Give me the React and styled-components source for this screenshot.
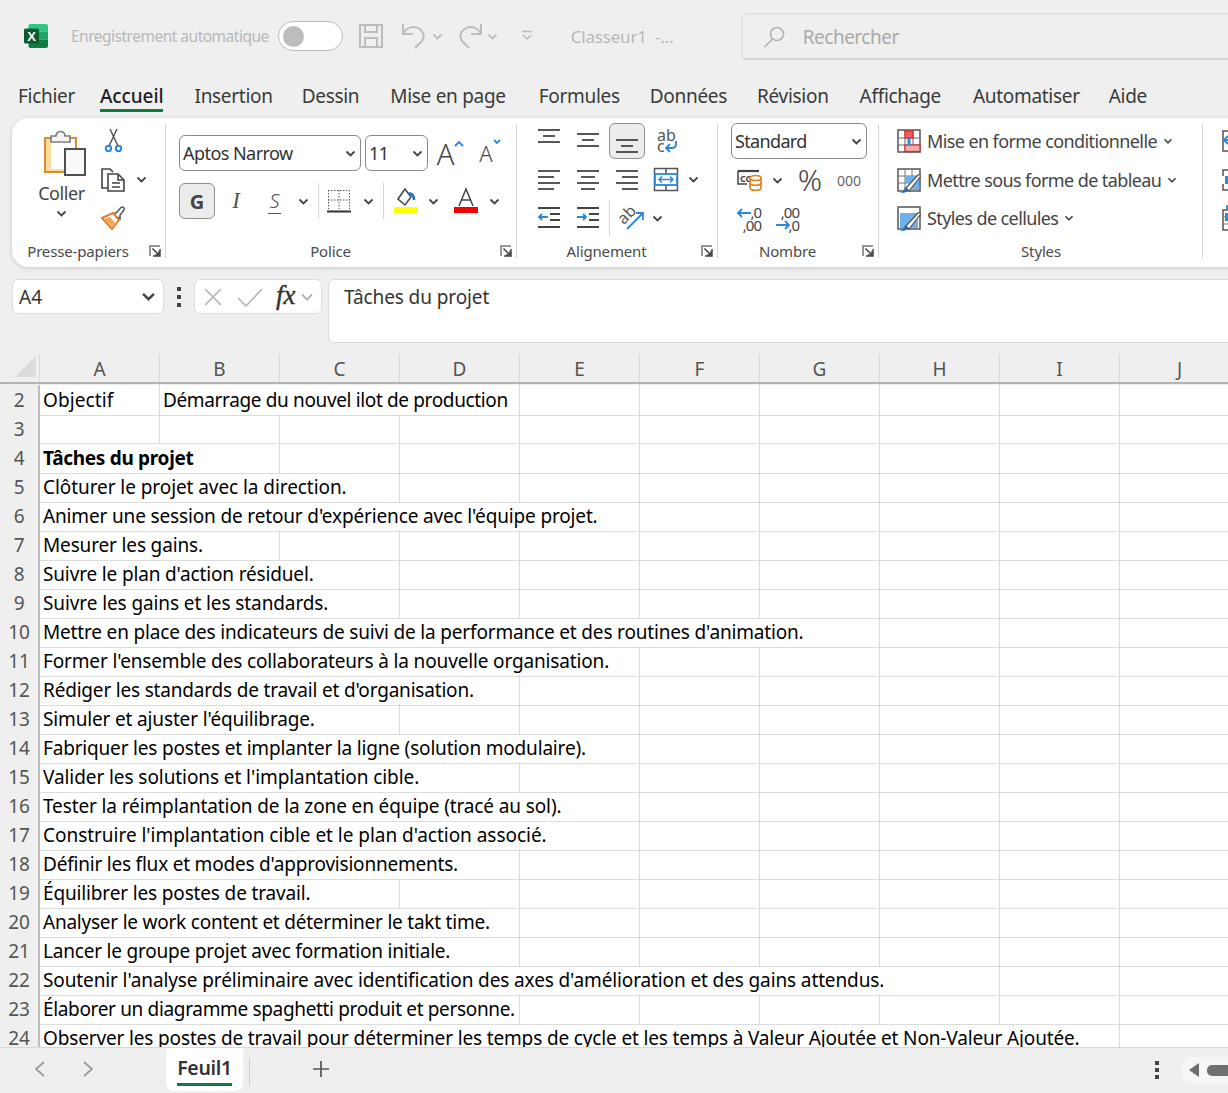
import React from 'react';
import styled, { createGlobalStyle } from 'styled-components';

const UI_FONT = '"Noto Sans", "Liberation Sans", sans-serif';
const CELL_FONT = '"Noto Sans", "Liberation Sans", sans-serif';

const GlobalStyle = createGlobalStyle`
  html, body {
    margin: 0;
    padding: 0;
    background: #efefef;
  }
  * { box-sizing: border-box; }
  svg { overflow: visible; flex: none; }
`;

const Page = styled.div`
  width: 1228px;
  height: 1093px;
  overflow: hidden;
  display: flex;
  flex-direction: column;
  background: #efefef;
  font-family: ${UI_FONT};
  color: #444;
`;

/* title bar */
const TitleBar = styled.div`
  height: 72px;
  flex: none;
  display: flex;
  align-items: center;
  padding-left: 24px;
  color: #b8b8b8;
`;
const TitleText = styled.span`
  flex: none;
  font-size: ${p => p.$size || 15.5}px;
  letter-spacing: ${p => p.$ls || '-0.5px'};
  white-space: nowrap;
  margin-left: ${p => p.$ml || 0}px;
  width: ${p => (p.$w ? `${p.$w}px` : 'auto')};
`;
const Toggle = styled.div`
  width: 65px;
  height: 30px;
  flex: none;
  margin-left: 9px;
  border: 1.5px solid #bdbdbd;
  border-radius: 15px;
  background: #fff;
  display: flex;
  align-items: center;
  padding-left: 4px;
`;
const Knob = styled.div`
  width: 21px;
  height: 21px;
  border-radius: 50%;
  background: #bdbdbd;
`;
const TitleIcon = styled.div`
  display: flex;
  flex: none;
  margin-left: ${p => p.$ml || 0}px;
`;
const SearchBox = styled.div`
  width: 500px;
  height: 47px;
  flex: none;
  margin: 1px 0 0 65px;
  display: flex;
  align-items: center;
  padding-left: 20px;
  gap: 18px;
  border: 2px solid #e2e2e2;
  border-bottom-color: #d4d4d4;
  border-radius: 6px;
  color: #a9a9a9;
  font-size: 19px;
  letter-spacing: -0.5px;
`;

/* menu tabs */
const TabBar = styled.div`
  height: 46px;
  flex: none;
  display: flex;
  gap: 31px;
  padding: 10px 0 0 18px;
  font-size: 19px;
  letter-spacing: -0.3px;
  color: #3a3a3a;
`;
const MenuTab = styled.div`
  height: 30px;
  line-height: 28px;
  white-space: nowrap;
  font-weight: ${p => (p.$active ? 500 : 400)};
  letter-spacing: ${p => (p.$active ? '-0.1px' : 'inherit')};
  color: ${p => (p.$active ? '#222' : '#3a3a3a')};
  border-bottom: 3px solid ${p => (p.$active ? '#107c41' : 'transparent')};
  margin-left: ${p => p.$ml || 0}px;
`;

/* ribbon */
const Ribbon = styled.div`
  height: 149px;
  flex: none;
  margin-left: 12px;
  width: 1240px;
  background: #fff;
  border-radius: 16px 0 0 16px;
  box-shadow: 0 1px 4px rgba(0, 0, 0, 0.16);
  display: flex;
`;
const Group = styled.div`
  width: ${p => p.$w}px;
  flex: none;
  display: flex;
  flex-direction: column;
  position: relative;
  &::after {
    content: '';
    position: absolute;
    right: 0;
    top: 6px;
    bottom: 9px;
    width: 1px;
    background: #d6d6d6;
  }
`;
const GroupBody = styled.div`
  height: 122px;
  flex: none;
  display: flex;
  padding-left: ${p => p.$pl || 0}px;
  padding-top: ${p => p.$pt || 4}px;
`;
const GroupFooter = styled.div`
  flex: 1;
  display: flex;
  align-items: flex-start;
  padding-right: ${p => (p.$launcher ? 5 : 0)}px;
  font-size: 15px;
  letter-spacing: -0.15px;
  color: #4a4a4a;
`;
const GroupLabel = styled.div`
  flex: 1;
  text-align: center;
  line-height: 22px;
`;
const LauncherWrap = styled.div`
  width: 17px;
  padding-top: 5px;
  display: flex;
  justify-content: flex-end;
`;
const PasteCol = styled.div`
  width: 73px;
  display: flex;
  flex-direction: column;
  align-items: center;
  padding-top: 8px;
  font-size: 18px;
  letter-spacing: -0.4px;
  color: #444;
`;
const PasteArt = styled.div`
  display: flex;
  margin-left: 6px;
`;
const PasteText = styled.div`
  line-height: 24px;
  margin-top: 5px;
  margin-bottom: 4px;
`;
const IconGrid = styled.div`
  display: grid;
  grid-template-columns: ${p => p.$cols};
  grid-auto-rows: 38.5px;
  align-items: center;
  justify-items: center;
`;
const IconCell = styled.div`
  display: flex;
  align-items: center;
  justify-content: center;
`;
const OrientCell = styled.div`
  grid-column: span 2;
  justify-self: start;
  width: 62px;
  height: 36px;
  margin-left: 2px;
  border-left: 1px solid #d6d6d6;
  display: flex;
  align-items: center;
  padding-left: 7px;
  gap: 8px;
`;
const PressedBtn = styled.div`
  width: 36px;
  height: 36px;
  background: #ececec;
  border: 1.5px solid #8f8f8f;
  border-radius: 6px;
  display: flex;
  align-items: center;
  justify-content: center;
  font-size: 20px;
  font-weight: 700;
  color: #444;
`;
const SelectBox = styled.div`
  width: ${p => p.$w}px;
  height: 36px;
  flex: none;
  border: 1px solid #8a8a8a;
  border-radius: 6px;
  background: #fff;
  display: flex;
  align-items: center;
  justify-content: space-between;
  padding: 0 4px 0 3px;
  font-size: 18px;
  letter-spacing: ${p => p.$ls || '-0.55px'};
  color: #333;
  margin-right: ${p => p.$mr || 0}px;
`;
const FontColumn = styled.div`
  display: flex;
  flex-direction: column;
  gap: 12px;
`;
const FontRow = styled.div`
  display: flex;
  align-items: center;
  height: 36px;
`;
const FontSlot = styled.div`
  width: ${p => p.$w}px;
  flex: none;
  display: flex;
  justify-content: center;
  align-items: center;
  align-self: stretch;
  margin-left: ${p => p.$ml || 0}px;
  border-left: ${p => (p.$sep ? '1px solid #d6d6d6' : 'none')};
`;
const ItalicMark = styled.span`
  font-family: "Liberation Serif", serif;
  font-style: italic;
  font-size: 23px;
  color: #555;
`;
const UnderlineMark = styled.span`
  font-style: italic;
  font-weight: 300;
  font-size: 20px;
  line-height: 24px;
  border-bottom: 1.5px solid #555;
  color: #555;
  padding: 0 1px;
`;
const SizeMark = styled.div`
  display: flex;
  align-items: flex-start;
  font-weight: 300;
  font-size: ${p => p.$size}px;
  line-height: 1;
  color: #444;
`;
const Caret = styled.svg`
  margin: ${p => p.$top}px 0 0 0;
`;
const NumberColumn = styled.div`
  display: flex;
  flex-direction: column;
`;
const NumberRow = styled.div`
  display: flex;
  align-items: center;
  height: 38.5px;
  margin-top: ${p => p.$mt || 0}px;
`;
const Percent = styled.span`
  font-size: 30px;
  font-weight: 300;
  line-height: 1;
`;
const Thousands = styled.span`
  font-size: 14px;
  color: #666;
  letter-spacing: 0;
`;
const StyleColumn = styled.div`
  display: flex;
  flex-direction: column;
`;
const StyleRow = styled.div`
  height: 38.5px;
  display: flex;
  align-items: center;
  gap: 6px;
  font-size: 18px;
  letter-spacing: -0.6px;
  color: #444;
  white-space: nowrap;
`;

/* formula bar */
const FormulaBar = styled.div`
  height: 64px;
  flex: none;
  margin-top: 12px;
  display: flex;
  align-items: flex-start;
  padding-left: 12px;
`;
const NameBox = styled.div`
  width: 152px;
  height: 35px;
  flex: none;
  background: #fff;
  border: 1px solid #dcdcdc;
  border-radius: 6px;
  display: flex;
  align-items: center;
  justify-content: space-between;
  padding: 0 7px 0 6px;
  font-size: 19px;
  color: #333;
`;
const Dots = styled.div`
  flex: none;
  display: flex;
  flex-direction: column;
  align-items: center;
  justify-content: center;
  gap: ${p => p.$gap || 4}px;
  width: ${p => p.$w || 30}px;
  height: ${p => p.$h || 35}px;
`;
const Dot = styled.div`
  width: 4px;
  height: 4px;
  background: #444;
`;
const FxBox = styled.div`
  width: 128px;
  height: 35px;
  flex: none;
  background: #fff;
  border: 1px solid #dcdcdc;
  border-radius: 6px;
  display: flex;
  align-items: center;
  padding-left: 8px;
  gap: 14px;
`;
const FxLabel = styled.span`
  font-family: "Liberation Serif", serif;
  font-style: italic;
  font-size: 27px;
  line-height: 1;
  color: #333;
  -webkit-text-stroke: 0.4px #333;
  margin: -3px -10px 0 -1px;
`;
const FormulaInput = styled.div`
  width: 920px;
  height: 64px;
  flex: none;
  margin-left: 6px;
  background: #fff;
  border: 1px solid #dcdcdc;
  border-radius: 6px;
  padding: 4px 15px;
  font-family: ${CELL_FONT};
  font-size: 19px;
  letter-spacing: -0.1px;
  line-height: 26px;
  color: #333;
`;

/* sheet */
const HeaderRow = styled.div`
  height: 30px;
  flex: none;
  margin-top: 11px;
  display: flex;
  border-bottom: 2px solid #b4b4b4;
`;
const Corner = styled.div`
  width: 40px;
  flex: none;
  border-right: 1px solid #d8d8d8;
  padding: 2px 0 0 15px;
`;
const ColHead = styled.div`
  width: 120px;
  flex: none;
  text-align: center;
  font-size: 19px;
  line-height: 30px;
  color: #555;
  border-right: 1px solid #d8d8d8;
`;
const Sheet = styled.div`
  height: 662px;
  flex: none;
  margin-top: 1px;
  overflow: hidden;
  background: #fff;
`;
const Row = styled.div`
  height: 29px;
  display: grid;
  grid-template-columns: 40px repeat(10, 120px);
  font-family: ${CELL_FONT};
`;
const RowHead = styled.div`
  background: #efefef;
  border-right: 2px solid #bdbdbd;
  text-align: center;
  font-size: 19px;
  line-height: 30px;
  letter-spacing: -0.2px;
  color: #555;
`;
const Cell = styled.div`
  grid-column: span ${p => p.$span || 1};
  border-right: 1px solid #dcdcdc;
  border-bottom: 1px solid #dcdcdc;
  padding-left: 3px;
  font-size: 19px;
  line-height: 30px;
  letter-spacing: ${p => p.$ls ?? -0.15}px;
  font-weight: ${p => (p.$bold ? 700 : 400)};
  color: #000;
  white-space: nowrap;
  overflow: visible;
`;

/* bottom bar */
const SheetBar = styled.div`
  flex: 1;
  display: flex;
  align-items: flex-start;
  border-top: 1px solid #d8d8d8;
`;
const NavArrows = styled.div`
  width: 166px;
  flex: none;
  display: flex;
  gap: 36px;
  padding: 12px 0 0 34px;
`;
const SheetTab = styled.div`
  width: 77px;
  height: 43px;
  flex: none;
  background: #fff;
  border-radius: 0 0 8px 8px;
  font-size: 19.5px;
  font-weight: 600;
  color: #333;
  line-height: 26px;
  padding-top: 7px;
  letter-spacing: -0.3px;
  display: flex;
  justify-content: center;
`;
const TabLabel = styled.div`
  height: 31px;
  border-bottom: 3px solid #107c41;
`;
const TabSep = styled.div`
  width: 1px;
  height: 28px;
  flex: none;
  margin: 10px 0 0 6px;
  background: #cfcfcf;
`;
const AddSheet = styled.div`
  flex: none;
  margin: 12px 0 0 62px;
  display: flex;
`;
const BarDots = styled.div`
  flex: none;
  margin: 13px 0 0 824px;
`;
const ScrollPill = styled.div`
  flex: none;
  width: 60px;
  height: 26px;
  margin: 9px 0 0 21px;
  background: #f6f6f6;
  border-radius: 13px 0 0 13px;
  display: flex;
  align-items: center;
  padding-left: 8px;
  gap: 8px;
`;
const ScrollThumb = styled.div`
  width: 40px;
  height: 11px;
  flex: none;
  border-radius: 5px 0 0 5px;
  background: #707070;
`;

/* icons */
const Chevron = ({ size = 9, color = '#444', weight = 1.8 }) => (
  <svg width={size + 2} height={size} viewBox="0 0 11 9">
    <path d="M1.5 2.5 5.5 6.5 9.5 2.5" fill="none" stroke={color} strokeWidth={weight} />
  </svg>
);
const ExcelLogo = () => (
  <svg width="24" height="24" viewBox="0 0 24 24">
    <path d="M6.500 0H22a2 2 0 0 1 2 2v5.500H4.500V2a2 2 0 0 1 2-2z" fill="#33c481" />
    <rect x="14" y="7.500" width="10" height="8" fill="#21a366" />
    <rect x="4.500" y="7.500" width="9.500" height="8" fill="#18864e" />
    <path d="M4.500 15.500H24V22a2 2 0 0 1-2 2H6.500a2 2 0 0 1-2-2z" fill="#107c41" />
    <rect x="0" y="4.500" width="15" height="15" rx="1.500" fill="#0b5a30" />
    <text x="7.500" y="16.800" textAnchor="middle" fontFamily="Liberation Sans" fontWeight="700" fontSize="13" fill="#fff">X</text>
  </svg>
);
const SaveIcon = () => (
  <svg width="24" height="26" viewBox="0 0 24 26" fill="none" stroke="#bdbdbd" strokeWidth="2">
    <path d="M1 2h22v22H1z" />
    <path d="M6 2v7h12V2M6 24v-9h12v9" />
  </svg>
);
const UndoIcon = () => (
  <svg width="23" height="26" viewBox="0 0 23 26" fill="none" stroke="#bdbdbd" strokeWidth="2">
    <path d="M1 1v10h10" />
    <path d="M1.500 10C5 4 12 2.500 17 5.500c5 3.500 6 9 2.500 13L13 25" />
  </svg>
);
const RedoIcon = () => (
  <svg width="23" height="26" viewBox="0 0 23 26" fill="none" stroke="#bdbdbd" strokeWidth="2">
    <path d="M22 1v10H12" />
    <path d="M21.500 10C18 4 11 2.500 6 5.500c-5 3.500-6 9-2.500 13L10 25" />
  </svg>
);
const QatMore = () => (
  <svg width="12" height="12" viewBox="0 0 12 12" fill="none" stroke="#bdbdbd" strokeWidth="1.500">
    <path d="M1 1.500h10M2 5l4 4 4-4" />
  </svg>
);
const SearchIcon = () => (
  <svg width="22" height="22" viewBox="0 0 22 22" fill="none" stroke="#b5b5b5" strokeWidth="1.700">
    <circle cx="14" cy="8" r="6.500" />
    <path d="M9.500 13 1.500 21" />
  </svg>
);
const PasteIcon = () => (
  <svg width="42" height="46" viewBox="0 0 42 46">
    <path d="M1 8h31v34H1z" fill="#fff" stroke="#e08a2e" strokeWidth="2" />
    <path d="M2 9h5v30h18v2H2z" fill="#fbdc9c" />
    <path d="M7 12V6h5c0-6 9-6 9 0h5v6z" fill="#f4f4f4" stroke="#7d7d7d" strokeWidth="1.700" />
    <rect x="21" y="19" width="20" height="26" fill="#fafafa" stroke="#505050" strokeWidth="2" />
  </svg>
);
const CutIcon = () => (
  <svg width="17" height="24" viewBox="0 0 17 24" fill="none">
    <path d="M5 0 12.500 16M12 0 4.500 16" stroke="#555" strokeWidth="1.500" />
    <circle cx="3.500" cy="19.500" r="2.700" stroke="#2b88d8" strokeWidth="2" />
    <circle cx="13.500" cy="19.500" r="2.700" stroke="#2b88d8" strokeWidth="2" />
  </svg>
);
const CopyIcon = () => (
  <svg width="24" height="24" viewBox="0 0 24 24" fill="none" stroke="#444" strokeWidth="1.600">
    <path d="M6 20H1V1h8l3 3" />
    <path d="M7 6h10l6 6v11H7z" fill="#fff" />
    <path d="M17 6v6h6M11 15h8M11 19h8" />
  </svg>
);
const BrushIcon = () => (
  <svg width="24" height="24" viewBox="0 0 24 24">
    <path d="M11 8 15 7 20 1.500c1.500-1.500 4 .5 3 2.500l-4 5 0 4z" fill="#fff" stroke="#555" strokeWidth="1.500" />
    <path d="M1 12 12 7l6 7-7 9z" fill="#fff" stroke="#e0812b" strokeWidth="2" />
    <path d="M3 13l8 8 3-4-5-6z" fill="#f2a65a" />
  </svg>
);
const Launcher = () => (
  <svg width="12" height="12" viewBox="0 0 12 12" fill="none">
    <path d="M1 11V1h10" stroke="#777" strokeWidth="1.500" />
    <path d="M11 4v7H4" stroke="#444" strokeWidth="1.500" />
    <path d="M3.500 3.500 10 10M10 6v4H6" stroke="#444" strokeWidth="1.500" />
  </svg>
);
const BorderIcon = () => (
  <svg width="24" height="24" viewBox="0 0 24 24" fill="none">
    <path d="M1 1.500h22M1.500 1v19M22.500 1v19M1 11h22M12 1v19" stroke="#555" strokeWidth="1" strokeDasharray="1.500 1.500" />
    <path d="M0 22.500h24" stroke="#333" strokeWidth="2" />
  </svg>
);
const FillIcon = () => (
  <svg width="24" height="26" viewBox="0 0 24 26">
    <path d="M4 11 11 1l6 8-6 8z" fill="#fff" stroke="#444" strokeWidth="1.500" />
    <path d="M14 6c4-2 6 2 6 6" fill="none" stroke="#1f6fc0" strokeWidth="2.500" />
    <rect y="19" width="24" height="6" fill="#ffff00" />
  </svg>
);
const ColorA = () => (
  <svg width="24" height="26" viewBox="0 0 24 26">
    <path d="M5 18 12 1l7 17M7.500 12h9" fill="none" stroke="#444" strokeWidth="1.500" />
    <rect y="19" width="24" height="6" fill="#f40000" />
  </svg>
);
const Lines = ({ rows }) => (
  <svg width="24" height="24" viewBox="0 0 24 24" fill="none" stroke="#444" strokeWidth="1.800">
    {rows.map(([x1, x2, y]) => (
      <path key={y} d={`M${x1} ${y}H${x2}`} />
    ))}
  </svg>
);
const WrapIcon = () => (
  <svg width="24" height="28" viewBox="0 0 24 28" fill="none">
    <text x="3" y="13.500" fontFamily="Noto Sans" fontSize="16" fill="#555">ab</text>
    <text x="3" y="24.500" fontFamily="Noto Sans" fontSize="16" fill="#555">c</text>
    <path d="M22 14v3c0 3-2 4-4 4h-6M16 17l-4 4 4 4" stroke="#2b88d8" strokeWidth="1.900" />
  </svg>
);
const MergeIcon = () => (
  <svg width="24" height="23" viewBox="0 0 24 23">
    <rect x="0.500" y="0.500" width="23" height="22" fill="#fff" stroke="#555" strokeWidth="1.500" />
    <path d="M12 1v5M12 17v5" stroke="#555" strokeWidth="1.500" />
    <rect x="1" y="6" width="22" height="11" fill="#fff" stroke="#2b88d8" strokeWidth="1.800" />
    <path d="M5 11.500h14M8 8.500l-3 3 3 3M16 8.500l3 3-3 3" fill="none" stroke="#2b88d8" strokeWidth="1.500" />
  </svg>
);
const IndentIcon = ({ right }) => (
  <svg width="22" height="24" viewBox="0 0 22 24" fill="none">
    <path d="M0 2h22M0 21h22M12 8h10M12 14h10" stroke="#444" strokeWidth="1.800" />
    <path d={right ? 'M0 11h9M6 8l3 3-3 3' : 'M1 11h9M4 8l-3 3 3 3'} stroke="#2b88d8" strokeWidth="1.800" />
  </svg>
);
const OrientIcon = () => (
  <svg width="27" height="24" viewBox="0 0 27 24" fill="none">
    <text x="10" y="14" textAnchor="middle" transform="rotate(-45 10 9)" fontFamily="Noto Sans" fontSize="16" fill="#555">ab</text>
    <path d="M10 23 26 7M19 7h7v7" stroke="#2b88d8" strokeWidth="1.800" />
  </svg>
);
const AccountingIcon = () => (
  <svg width="26" height="24" viewBox="0 0 26 24" fill="none">
    <path d="M1 3h21" stroke="#444" strokeWidth="2.200" />
    <path d="M1 3v13h9" stroke="#444" strokeWidth="1.500" />
    <text x="3" y="13.500" fontFamily="Noto Sans" fontSize="9" fontWeight="700" fill="#444">CC</text>
    <path d="M13 10v10c0 3 11 3 11 0V10z" fill="#fff" stroke="#e8811a" strokeWidth="1.700" />
    <ellipse cx="18.500" cy="10" rx="5.500" ry="2.500" fill="#fff" stroke="#e8811a" strokeWidth="1.700" />
    <path d="M13 15c0 3 11 3 11 0" stroke="#e8811a" strokeWidth="1.700" />
  </svg>
);
const DecimalIcon = ({ more }) => (
  <svg width="26" height="26" viewBox="0 0 26 26" fill="none">
    {more ? (
      <>
        <text x="24" y="11.500" textAnchor="end" fontFamily="Noto Sans" fontSize="15" letterSpacing="-1" fill="#444">,00</text>
        <text x="24" y="25" textAnchor="end" fontFamily="Noto Sans" fontSize="15" letterSpacing="-1" fill="#444">,0</text>
        <path d="M1 19h13M10 15l4 4-4 4" stroke="#2b88d8" strokeWidth="1.800" />
      </>
    ) : (
      <>
        <text x="25" y="11.500" textAnchor="end" fontFamily="Noto Sans" fontSize="15" letterSpacing="-1" fill="#444">,0</text>
        <text x="25" y="25" textAnchor="end" fontFamily="Noto Sans" fontSize="15" letterSpacing="-1" fill="#444">,00</text>
        <path d="M2 7h13M6 3 2 7l4 4" stroke="#2b88d8" strokeWidth="1.800" />
      </>
    )}
  </svg>
);
const CondFormatIcon = () => (
  <svg width="24" height="24" viewBox="0 0 24 24">
    <rect x="1" y="1" width="22" height="22" fill="#fff" stroke="#555" strokeWidth="1.500" />
    <path d="M8 1v22M16 1v22M1 9h22M1 16h22" stroke="#666" strokeWidth="1" fill="none" />
    <rect x="8" y="2" width="8" height="7" fill="#f25c5c" stroke="#d92b2b" strokeWidth="1.200" />
    <rect x="8" y="16" width="15" height="6.500" fill="#f7a8a8" stroke="#d92b2b" strokeWidth="1.200" />
    <path d="M12 9v7" stroke="#2b88d8" strokeWidth="3" />
  </svg>
);
const TableIcon = ({ plain }) => (
  <svg width="24" height="24" viewBox="0 0 24 24">
    <rect x="1" y="1" width="22" height="22" fill="#fff" stroke="#555" strokeWidth="1.500" />
    {plain ? (
      <path d="M3 7h18v15H3z" fill="#6eb0ea" />
    ) : (
      <>
        <path d="M1 8h22M1 15h22M8 1v22M15 1v22" stroke="#777" strokeWidth="1" fill="none" />
        <path d="M15 8h7v7h-7zM8 8h7v7H8zM15 15h7v7h-7z" fill="#6eb0ea" />
      </>
    )}
    <path d="M9 20 21 7c1-1 3 0 2 2L12 23z" fill="#fff" stroke="#555" strokeWidth="1.200" />
    <path d="M1 25c4 0 6-2 7-6l3 3c-2 3-5 3-10 3z" fill="#1f6fc0" />
  </svg>
);
const InsertCellsIcon = () => (
  <svg width="24" height="24" viewBox="0 0 24 24" fill="none">
    <rect x="1" y="2" width="22" height="20" stroke="#555" strokeWidth="1.500" />
    <path d="M14 11H2M6 7l-4 4 4 4" stroke="#2b88d8" strokeWidth="1.800" />
  </svg>
);
const DeleteCellsIcon = () => (
  <svg width="24" height="24" viewBox="0 0 24 24" fill="none">
    <path d="M1 8V2h22v6M1 16v6h22v-6" stroke="#555" strokeWidth="1.500" />
    <rect x="3" y="8" width="4" height="8" fill="#2b88d8" />
  </svg>
);
const FormatCellsIcon = () => (
  <svg width="24" height="26" viewBox="0 0 24 26" fill="none">
    <rect x="1" y="5" width="22" height="20" stroke="#555" strokeWidth="1.500" />
    <path d="M1 12h22M1 19h22" stroke="#777" strokeWidth="1" />
    <path d="M5 0v5" stroke="#2b88d8" strokeWidth="1.800" />
    <rect x="3" y="8" width="4" height="8" fill="#2b88d8" />
  </svg>
);
const FormulaCross = () => (
  <svg width="20" height="20" viewBox="0 0 20 20" fill="none" stroke="#b5b5b5" strokeWidth="1.700">
    <path d="M2 2 18 18M18 2 2 18" />
  </svg>
);
const FormulaCheck = () => (
  <svg width="26" height="20" viewBox="0 0 26 20" fill="none" stroke="#b5b5b5" strokeWidth="1.700">
    <path d="M1 11 9 19 25 2" />
  </svg>
);
const NavArrow = ({ right }) => (
  <svg width="12" height="18" viewBox="0 0 12 18" fill="none" stroke="#9a9a9a" strokeWidth="1.800">
    <path d={right ? 'M2 2l8 7-8 7' : 'M10 2 2 9l8 7'} />
  </svg>
);
const PlusIcon = () => (
  <svg width="18" height="18" viewBox="0 0 18 18" fill="none" stroke="#555" strokeWidth="1.700">
    <path d="M9 1v16M1 9h16" />
  </svg>
);
const ScrollLeft = () => (
  <svg width="10" height="14" viewBox="0 0 10 14">
    <path d="M10 0v14L0 7z" fill="#6e6e6e" />
  </svg>
);

const tabs = [
  { name: 'Fichier' },
  { name: 'Accueil', ml: -6, active: true },
  { name: 'Insertion' },
  { name: 'Dessin', ml: -2 },
  { name: 'Mise en page' },
  { name: 'Formules', ml: 2 },
  { name: 'Données', ml: -1 },
  { name: 'Révision', ml: -1 },
  { name: 'Affichage' },
  { name: 'Automatiser', ml: 1 },
  { name: 'Aide', ml: -2 },
];
const columns = ['A', 'B', 'C', 'D', 'E', 'F', 'G', 'H', 'I', 'J'];

// span = number of columns the text runs over, ls = letter spacing where the width differs
const rows = [
  { n: 2, cells: [{ text: 'Objectif', span: 1, ls: 0.1 }, { text: 'Démarrage du nouvel ilot de production', span: 3, ls: -0.36 }] },
  { n: 3, cells: [] },
  { n: 4, cells: [{ text: 'Tâches du projet', span: 2, bold: true, ls: -0.3 }] },
  { n: 5, cells: [{ text: 'Clôturer le projet avec la direction.', span: 3, ls: -0.07 }] },
  { n: 6, cells: [{ text: "Animer une session de retour d'expérience avec l'équipe projet.", span: 5 }] },
  { n: 7, cells: [{ text: 'Mesurer les gains.', span: 2 }] },
  { n: 8, cells: [{ text: "Suivre le plan d'action résiduel.", span: 3 }] },
  { n: 9, cells: [{ text: 'Suivre les gains et les standards.', span: 3, ls: -0.1 }] },
  { n: 10, cells: [{ text: "Mettre en place des indicateurs de suivi de la performance et des routines d'animation.", span: 7, ls: -0.17 }] },
  { n: 11, cells: [{ text: "Former l'ensemble des collaborateurs à la nouvelle organisation.", span: 5 }] },
  { n: 12, cells: [{ text: "Rédiger les standards de travail et d'organisation.", span: 4, ls: -0.19 }] },
  { n: 13, cells: [{ text: "Simuler et ajuster l'équilibrage.", span: 3 }] },
  { n: 14, cells: [{ text: 'Fabriquer les postes et implanter la ligne (solution modulaire).', span: 5, ls: -0.18 }] },
  { n: 15, cells: [{ text: "Valider les solutions et l'implantation cible.", span: 4, ls: -0.08 }] },
  { n: 16, cells: [{ text: 'Tester la réimplantation de la zone en équipe (tracé au sol).', span: 5, ls: -0.12 }] },
  { n: 17, cells: [{ text: "Construire l'implantation cible et le plan d'action associé.", span: 5, ls: -0.03 }] },
  { n: 18, cells: [{ text: "Définir les flux et modes d'approvisionnements.", span: 4, ls: -0.21 }] },
  { n: 19, cells: [{ text: 'Équilibrer les postes de travail.', span: 3 }] },
  { n: 20, cells: [{ text: 'Analyser le work content et déterminer le takt time.', span: 4, ls: -0.23 }] },
  { n: 21, cells: [{ text: 'Lancer le groupe projet avec formation initiale.', span: 4, ls: -0.21 }] },
  { n: 22, cells: [{ text: "Soutenir l'analyse préliminaire avec identification des axes d'amélioration et des gains attendus.", span: 8, ls: -0.12 }] },
  { n: 23, cells: [{ text: 'Élaborer un diagramme spaghetti produit et personne.', span: 4, ls: -0.34 }] },
  { n: 24, cells: [{ text: 'Observer les postes de travail pour déterminer les temps de cycle et les temps à Valeur Ajoutée et Non-Valeur Ajoutée.', span: 9 }] },
];

const SheetRow = ({ row }) => {
  const used = row.cells.reduce((sum, c) => sum + c.span, 0);
  const blanks = Array.from({ length: 10 - used });
  return (
    <Row>
      <RowHead>{row.n}</RowHead>
      {row.cells.map((c, i) => (
        <Cell key={i} $span={c.span} $bold={c.bold} $ls={c.ls}>{c.text}</Cell>
      ))}
      {blanks.map((_, i) => (
        <Cell key={`b${i}`} />
      ))}
    </Row>
  );
};

const App = () => (
  <Page>
    <GlobalStyle />
    <TitleBar>
      <TitleIcon><ExcelLogo /></TitleIcon>
      <TitleText $ml={23}>Enregistrement automatique</TitleText>
      <Toggle><Knob /></Toggle>
      <TitleIcon $ml={16}><SaveIcon /></TitleIcon>
      <TitleIcon $ml={19}><UndoIcon /></TitleIcon>
      <TitleIcon $ml={7}><Chevron color="#bdbdbd" /></TitleIcon>
      <TitleIcon $ml={16}><RedoIcon /></TitleIcon>
      <TitleIcon $ml={5}><Chevron color="#bdbdbd" /></TitleIcon>
      <TitleIcon $ml={23}><QatMore /></TitleIcon>
      <TitleText $ml={38} $w={105} $size={17} $ls="-0.2px">Classeur1&nbsp;&nbsp;-...</TitleText>
      <SearchBox>
        <SearchIcon />
        <span>Rechercher</span>
      </SearchBox>
    </TitleBar>

    <TabBar>
      {tabs.map(t => (
        <MenuTab key={t.name} $active={t.active} $ml={t.ml}>{t.name}</MenuTab>
      ))}
    </TabBar>

    <Ribbon>
      <Group $w={154}>
        <GroupBody $pl={13}>
          <PasteCol>
            <PasteArt><PasteIcon /></PasteArt>
            <PasteText>Coller</PasteText>
            <Chevron />
          </PasteCol>
          <IconGrid $cols="30px 26px">
            <IconCell><CutIcon /></IconCell>
            <span />
            <IconCell><CopyIcon /></IconCell>
            <IconCell><Chevron /></IconCell>
            <IconCell><BrushIcon /></IconCell>
          </IconGrid>
        </GroupBody>
        <GroupFooter $launcher>
          <GroupLabel>Presse-papiers</GroupLabel>
          <LauncherWrap><Launcher /></LauncherWrap>
        </GroupFooter>
      </Group>

      <Group $w={351}>
        <GroupBody $pl={13} $pt={17}>
          <FontColumn>
            <FontRow>
              <SelectBox $w={182} $mr={4}>Aptos Narrow<Chevron /></SelectBox>
              <SelectBox $w={63}>11<Chevron /></SelectBox>
              <FontSlot $w={25} $ml={10}>
                <SizeMark $size={29}>
                  A
                  <Caret $top={2} width="10" height="6" viewBox="0 0 10 6" fill="none"><path d="M1 5l4-4 4 4" stroke="#2b88d8" strokeWidth="1.800" /></Caret>
                </SizeMark>
              </FontSlot>
              <FontSlot $w={22} $ml={16}>
                <SizeMark $size={22}>
                  A
                  <Caret $top={-3} width="8" height="6" viewBox="0 0 8 6" fill="none"><path d="M1 1l3 3 3-3" stroke="#2b88d8" strokeWidth="1.800" /></Caret>
                </SizeMark>
              </FontSlot>
            </FontRow>
            <FontRow>
              <PressedBtn>G</PressedBtn>
              <FontSlot $w={42}><ItalicMark>I</ItalicMark></FontSlot>
              <FontSlot $w={35}><UnderlineMark>S</UnderlineMark></FontSlot>
              <FontSlot $w={22}><Chevron /></FontSlot>
              <FontSlot $w={40} $ml={4} $sep><BorderIcon /></FontSlot>
              <FontSlot $w={20}><Chevron /></FontSlot>
              <FontSlot $w={44} $ml={5} $sep><FillIcon /></FontSlot>
              <FontSlot $w={12}><Chevron /></FontSlot>
              <FontSlot $w={24} $ml={15}><ColorA /></FontSlot>
              <FontSlot $w={12} $ml={10}><Chevron /></FontSlot>
            </FontRow>
          </FontColumn>
        </GroupBody>
        <GroupFooter $launcher>
          <GroupLabel>Police</GroupLabel>
          <LauncherWrap><Launcher /></LauncherWrap>
        </GroupFooter>
      </Group>

      <Group $w={201}>
        <GroupBody $pl={12}>
          <IconGrid $cols="39px 39px 39px 39px 16px">
            <IconCell><Lines rows={[[1, 23, 1], [6, 18, 7], [1, 23, 13]]} /></IconCell>
            <IconCell><Lines rows={[[1, 23, 5], [6, 18, 11], [1, 23, 17]]} /></IconCell>
            <IconCell><PressedBtn><Lines rows={[[1, 23, 11], [6, 18, 17], [1, 23, 23]]} /></PressedBtn></IconCell>
            <IconCell><WrapIcon /></IconCell>
            <span />
            <IconCell><Lines rows={[[1, 23, 3], [1, 17, 9], [1, 23, 15], [1, 17, 21]]} /></IconCell>
            <IconCell><Lines rows={[[1, 23, 3], [5, 19, 9], [1, 23, 15], [5, 19, 21]]} /></IconCell>
            <IconCell><Lines rows={[[1, 23, 3], [7, 23, 9], [1, 23, 15], [7, 23, 21]]} /></IconCell>
            <IconCell><MergeIcon /></IconCell>
            <IconCell><Chevron /></IconCell>
            <IconCell><IndentIcon /></IconCell>
            <IconCell><IndentIcon right /></IconCell>
            <OrientCell>
              <OrientIcon />
              <Chevron />
            </OrientCell>
          </IconGrid>
        </GroupBody>
        <GroupFooter $launcher>
          <GroupLabel>Alignement</GroupLabel>
          <LauncherWrap><Launcher /></LauncherWrap>
        </GroupFooter>
      </Group>

      <Group $w={161}>
        <GroupBody $pl={13} $pt={5}>
          <NumberColumn>
            <SelectBox $w={136} $ls="-0.65px">Standard<Chevron /></SelectBox>
            <NumberRow $mt={2}>
              <FontSlot $w={38}><AccountingIcon /></FontSlot>
              <FontSlot $w={16}><Chevron /></FontSlot>
              <FontSlot $w={50}><Percent>%</Percent></FontSlot>
              <FontSlot $w={28}><Thousands>000</Thousands></FontSlot>
            </NumberRow>
            <NumberRow>
              <FontSlot $w={36}><DecimalIcon /></FontSlot>
              <FontSlot $w={42}><DecimalIcon more /></FontSlot>
            </NumberRow>
          </NumberColumn>
        </GroupBody>
        <GroupFooter $launcher>
          <GroupLabel>Nombre</GroupLabel>
          <LauncherWrap><Launcher /></LauncherWrap>
        </GroupFooter>
      </Group>

      <Group $w={324}>
        <GroupBody $pl={18}>
          <StyleColumn>
            <StyleRow><CondFormatIcon />Mise en forme conditionnelle <Chevron size={8} /></StyleRow>
            <StyleRow><TableIcon />Mettre sous forme de tableau <Chevron size={8} /></StyleRow>
            <StyleRow><TableIcon plain />Styles de cellules <Chevron size={8} /></StyleRow>
          </StyleColumn>
        </GroupBody>
        <GroupFooter>
          <GroupLabel>Styles</GroupLabel>
        </GroupFooter>
      </Group>

      <Group $w={60}>
        <GroupBody $pl={19}>
          <StyleColumn>
            <StyleRow><InsertCellsIcon /></StyleRow>
            <StyleRow><DeleteCellsIcon /></StyleRow>
            <StyleRow><FormatCellsIcon /></StyleRow>
          </StyleColumn>
        </GroupBody>
      </Group>
    </Ribbon>

    <FormulaBar>
      <NameBox>A4<Chevron size={13} /></NameBox>
      <Dots><Dot /><Dot /><Dot /></Dots>
      <FxBox>
        <FormulaCross />
        <FormulaCheck />
        <FxLabel>fx</FxLabel>
        <Chevron size={12} color="#aaa" weight={1.3} />
      </FxBox>
      <FormulaInput>Tâches du projet</FormulaInput>
    </FormulaBar>

    <HeaderRow>
      <Corner>
        <svg width="21" height="21" viewBox="0 0 21 21"><path d="M21 0v21H0z" fill="#dcdcdc" /></svg>
      </Corner>
      {columns.map(c => <ColHead key={c}>{c}</ColHead>)}
    </HeaderRow>

    <Sheet>
      {rows.map(r => <SheetRow key={r.n} row={r} />)}
    </Sheet>

    <SheetBar>
      <NavArrows><NavArrow /><NavArrow right /></NavArrows>
      <SheetTab><TabLabel>Feuil1</TabLabel></SheetTab>
      <TabSep />
      <AddSheet><PlusIcon /></AddSheet>
      <BarDots><Dots $w={6} $h={18} $gap={3}><Dot /><Dot /><Dot /></Dots></BarDots>
      <ScrollPill><ScrollLeft /><ScrollThumb /></ScrollPill>
    </SheetBar>
  </Page>
);

export default App;
